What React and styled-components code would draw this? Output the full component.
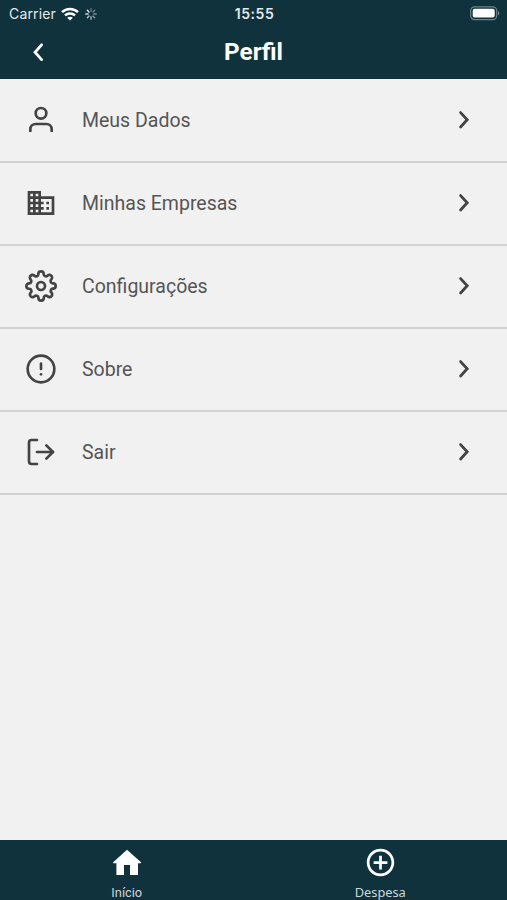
import styled, { createGlobalStyle } from "styled-components";
import { FiUser, FiSettings, FiAlertCircle, FiLogOut } from "react-icons/fi";
import { MdBusiness, MdAddCircleOutline } from "react-icons/md";

const GlobalStyle = createGlobalStyle`
    * {
        box-sizing: border-box;
    }
    body {
        margin: 0;
        background: #f1f1f1;
        font-family: Roboto, sans-serif;
    }
`;

const Screen = styled.div`
    display: flex;
    flex-direction: column;
    width: 100%;
    height: 100vh;
    overflow: hidden;
    background: #f1f1f1;
`;

const Header = styled.header`
    flex: none;
    height: 79px;
    background: #10323c;
    color: #fff;
`;

const StatusBar = styled.div`
    display: grid;
    grid-template-columns: 1fr auto 1fr;
    align-items: center;
    height: 27px;
    padding: 0 7px 0 9px;
    font-family: Inter, sans-serif;
    font-size: 14px;
    color: #e3eaec;
`;

const Carrier = styled.div`
    display: flex;
    align-items: center;
    gap: 5.5px;
    letter-spacing: 0.15px;
`;

const Clock = styled.div`
    font-weight: 600;
    letter-spacing: 0.55px;
`;

const Battery = styled.svg`
    justify-self: end;
`;

const TitleBar = styled.div`
    display: grid;
    grid-template-columns: 76px 1fr 76px;
    align-items: center;
    height: 50px;
`;

const BackButton = styled.button`
    display: flex;
    justify-content: center;
    padding: 0;
    border: 0;
    background: none;
    color: #fff;
`;

const Title = styled.h1`
    margin: 0;
    text-align: center;
    font-size: 24.3px;
    line-height: 28px;
    font-weight: 700;
`;

const Menu = styled.ul`
    flex: 1;
    margin: 0;
    padding: 1px 0 0;
    list-style: none;
`;

const MenuItem = styled.li`
    display: flex;
    align-items: center;
    height: 83.1px;
    padding: 0 37px 1.5px 25px;
    border-bottom: 2px solid #d2d2d2;
    color: #434343;
`;

const MenuIcon = styled.span`
    display: flex;
    width: 32px;
    margin-right: 25px;
    font-size: 32px;
`;

const Label = styled.span`
    flex: 1;
    padding-top: 2px;
    font-size: 19.5px;
    line-height: 24px;
    color: #555;
`;

const TabBar = styled.nav`
    display: flex;
    flex: none;
    height: 60px;
    background: #10323c;
`;

const Tab = styled.a`
    display: flex;
    flex: 1;
    flex-direction: column;
    align-items: center;
    padding-top: 6px;
    font-size: 33px;
    color: #fff;
`;

const TabLabel = styled.span`
    margin-top: 6px;
    font-family: ${(props) => props.$font};
    font-size: 12.8px;
    line-height: 15px;
    color: #cdd6d9;
`;

const items = [
    { title: "Meus Dados", icon: <FiUser strokeLinecap="butt" /> },
    { title: "Minhas Empresas", icon: <MdBusiness /> },
    { title: "Configurações", icon: <FiSettings /> },
    { title: "Sobre", icon: <FiAlertCircle /> },
    { title: "Sair", icon: <FiLogOut /> },
];

function Chevron({ left }) {
    return (
        <svg width="12" height="20" viewBox="0 0 12 20" fill="none" stroke="currentColor" strokeWidth="2.8" strokeLinecap="round">
            <path d={left ? "M9.6 2.8L3 10.3L9.6 17.6" : "M2.6 2.6L9.2 9.8L2.6 17"} />
        </svg>
    );
}

function Wifi() {
    return (
        <svg width="18" height="14" viewBox="0 0 18 14" fill="none" stroke="#fff" strokeWidth="2.5">
            <path d="M1 5.2C5.4.9 12.6.9 17 5.2" />
            <path d="M4 8.4c2.8-2.6 7.2-2.6 10 0" />
            <path d="M9 13.5L6.2 10.8c1.6-1.4 4-1.4 5.6 0z" fill="#fff" stroke="none" />
        </svg>
    );
}

function Spinner() {
    const opacities = [0.35, 0.4, 0.45, 0.5, 0.6, 0.7, 0.8, 0.9];
    return (
        <svg width="12" height="12" viewBox="-6 -6 12 12" stroke="#fff" strokeWidth="1.4" strokeLinecap="round">
            {opacities.map((opacity, i) => (
                <path key={i} d="M0-2.8V-5.2" opacity={opacity} transform={`rotate(${i * 45})`} />
            ))}
        </svg>
    );
}

function Home() {
    return (
        <svg width="33" height="33" viewBox="0 0 33 33" fill="currentColor">
            <path d="M17 3.7L31 16.3V17.2H28V29H20V19H14V29H6.4V17.2H3.2V16.3Z" />
        </svg>
    );
}

export default function App() {
    return (
        <Screen>
            <GlobalStyle />
            <Header>
                <StatusBar>
                    <Carrier>
                        Carrier <Wifi /> <Spinner />
                    </Carrier>
                    <Clock>15:55</Clock>
                    <Battery width="31" height="15" viewBox="0 0 31 15">
                        <rect x="1.7" y=".8" width="26" height="12.8" rx="3.8" fill="none" stroke="#6b8288" strokeWidth="1.2" />
                        <rect x="3.7" y="2.8" width="22" height="8.8" rx="2" fill="#fff" />
                        <path d="M29 5c1.9.7 1.9 3.7 0 4.4z" fill="#6b8288" />
                    </Battery>
                </StatusBar>
                <TitleBar>
                    <BackButton><Chevron left /></BackButton>
                    <Title>Perfil</Title>
                </TitleBar>
            </Header>

            <Menu>
                {items.map((item) => (
                    <MenuItem key={item.title}>
                        <MenuIcon>{item.icon}</MenuIcon>
                        <Label>{item.title}</Label>
                        <Chevron />
                    </MenuItem>
                ))}
            </Menu>

            <TabBar>
                <Tab>
                    <Home />
                    <TabLabel $font="Roboto, sans-serif">Início</TabLabel>
                </Tab>
                <Tab>
                    <MdAddCircleOutline />
                    <TabLabel $font="'Noto Sans', sans-serif">Despesa</TabLabel>
                </Tab>
            </TabBar>
        </Screen>
    );
}
